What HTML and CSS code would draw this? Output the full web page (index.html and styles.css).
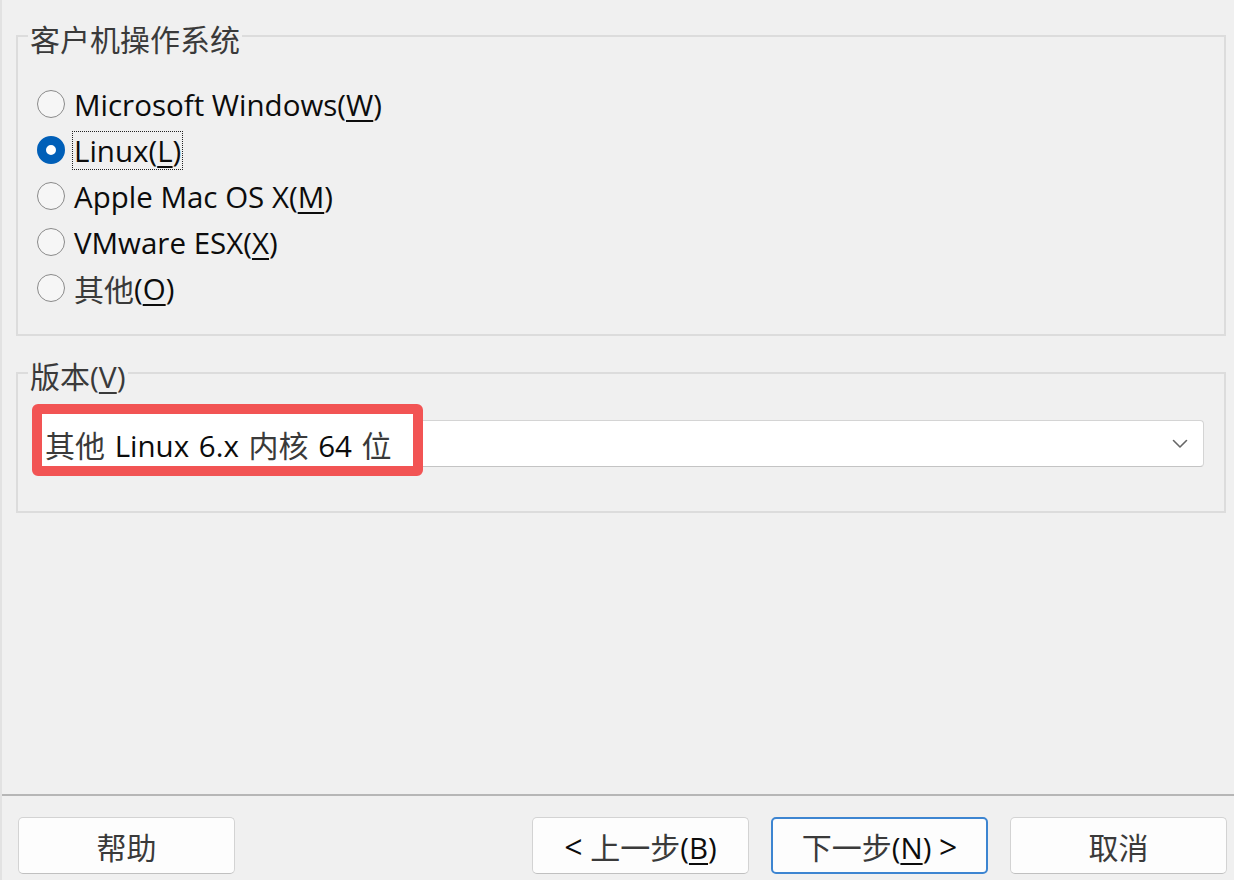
FILE: index.html
```html
<!DOCTYPE html>
<html lang="zh-CN">
<head>
<meta charset="utf-8">
<title>新建虚拟机向导</title>
<link rel="stylesheet" href="styles.css">
</head>
<body>
<div class="window">
  <main class="content">
    <fieldset class="group group-os">
      <legend class="cj">客户机操作系统</legend>
      <div class="radio-list">
        <label class="radio"><span class="dot"></span><span class="lbl">Microsoft Windows(<u>W</u>)</span></label>
        <label class="radio checked"><span class="dot"></span><span class="lbl focus">Linux(<u>L</u>)</span></label>
        <label class="radio"><span class="dot"></span><span class="lbl">Apple Mac OS X(<u>M</u>)</span></label>
        <label class="radio"><span class="dot"></span><span class="lbl">VMware ESX(<u>X</u>)</span></label>
        <label class="radio"><span class="dot"></span><span class="lbl"><span class="cj">其他</span>(<u>O</u>)</span></label>
      </div>
    </fieldset>
    <fieldset class="group group-ver">
      <legend><span class="cj">版本</span>(<u>V</u>)</legend>
      <div class="select">
        <span class="highlight"></span>
        <span class="value"><span class="cj">其他</span> Linux 6.x <span class="cj">内核</span> 64 <span class="cj">位</span></span>
        <svg class="chev" width="16" height="10" viewBox="0 0 16 10"><path d="M1.5 1.5 L8 8 L14.5 1.5" fill="none" stroke="#666" stroke-width="1.6" stroke-linecap="round" stroke-linejoin="round"/></svg>
      </div>
    </fieldset>
  </main>
  <footer class="footer">
    <button class="btn"><span class="cj">帮助</span></button>
    <span class="spacer"></span>
    <button class="btn"><span class="txt"><span class="arrow">&lt;</span> <span class="cj">上一步</span>(<u>B</u>)</span></button>
    <button class="btn primary"><span class="txt"><span class="cj">下一步</span>(<u>N</u>) <span class="arrow">&gt;</span></span></button>
    <button class="btn"><span class="cj">取消</span></button>
  </footer>
</div>
</body>
</html>
```

FILE: styles.css
```css
* { box-sizing: border-box; }
html, body { margin: 0; padding: 0; }
body {
  background: #f0f0f0;
  font-family: "Open Sans", "Noto Sans CJK SC", sans-serif;
  font-size: 29.5px;
  color: #0c0c0c;
}
.cj { color: #3a3a3a; font-size: 30px; }
u { text-underline-offset: 4px; text-decoration-thickness: 1.5px; }

.window {
  width: 1234px;
  height: 880px;
  display: flex;
  flex-direction: column;
  border-left: 2px solid #e2e2e2;
}
.content {
  flex: 1;
  padding: 16px 8px 0 14px;
  display: flex;
  flex-direction: column;
}
.group {
  margin: 0;
  padding: 0;
  border: 2px solid #dcdcdc;
  min-width: 0;
}
.group legend {
  margin-left: 10px;
  padding: 8px 2px 0;
  font-size: 30px;
  line-height: 32px;
  color: #3a3a3a;
}
.group-os .radio-list {
  padding: 25px 0 23px 19px;
  display: flex;
  flex-direction: column;
}
.radio {
  height: 46px;
  display: flex;
  align-items: center;
  gap: 7px;
}
.dot {
  width: 28px;
  height: 28px;
  border-radius: 50%;
  border: 1.5px solid #8a8a8a;
  background: #f6f6f6;
  flex: none;
}
.radio.checked .dot {
  border: 9px solid #005fb8;
  background: #ffffff;
}
.lbl {
  display: inline-flex;
  align-items: center;
  height: 39px;
  padding: 0 1px;
  border: 1px dotted transparent;
  white-space: pre;
}
.lbl.focus { border-color: #222; }

.group-ver { margin-top: 17px; }
.group-ver .select {
  margin: 27px 20px 44px 18px;
  height: 47px;
  background: #fff;
  border: 1px solid #d4d4d4;
  border-bottom-color: #c4c4c4;
  border-radius: 4px;
  position: relative;
  display: flex;
  align-items: center;
  padding-left: 8px;
}
.highlight {
  position: absolute;
  left: -5px;
  top: -17px;
  width: 391px;
  height: 72px;
  border: 10px solid #f25454;
  border-radius: 6px;
  background: #fff;
}
.value {
  position: relative;
  flex: 1;
  white-space: nowrap;
  word-spacing: 2px;
}
.chev { margin-right: 15px; flex: none; }

.footer {
  height: 86px;
  border-top: 2px solid #b6b6b6;
  display: flex;
  align-items: flex-start;
  gap: 22px;
  padding: 21px 7px 0 16px;
}
.spacer { flex: 1; }
.btn {
  width: 217px;
  height: 57px;
  font: inherit;
  color: #0c0c0c;
  background: #fdfdfd;
  border: 1px solid #d3d3d3;
  border-bottom-color: #c0c0c0;
  border-radius: 5px;
  padding: 0;
  display: flex;
  align-items: center;
  justify-content: center;
}
.btn .txt { white-space: pre; }
.btn .arrow { font-size: 32px; }
.btn.primary { border: 2px solid #3d85d1; }
```
